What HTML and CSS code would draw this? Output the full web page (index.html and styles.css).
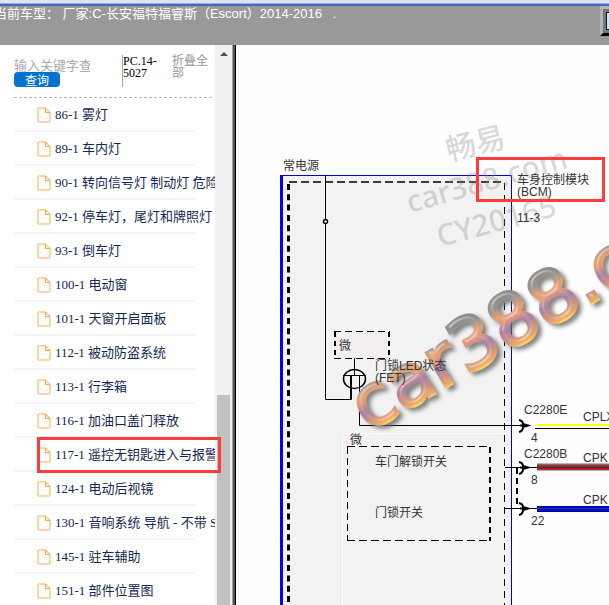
FILE: index.html
```
<!DOCTYPE html>
<html lang="zh-CN">
<head>
<meta charset="utf-8">
<title>长安福特福睿斯 电路图</title>
<link rel="stylesheet" href="styles.css">
</head>
<body>
<svg class="symbols" aria-hidden="true">
  <symbol id="file" viewBox="0 0 14 16">
    <path d="M2 1h6.500l4.500 4.500V14q0 1-1 1H2q-1 0-1-1V2q0-1 1-1z" fill="#fffdf9" stroke="#fac98f" stroke-width="1.500"/>
    <path d="M8.500 1v4.500H13" fill="none" stroke="#f2ad60" stroke-width="1.200"/>
  </symbol>
</svg>
<div class="page">
  <header class="topbar">
    <h1 class="vehicle">当前车型： 厂家:C-长安福特福睿斯（Escort）2014-2016 &nbsp; .</h1>
    <button class="window-button" type="button" aria-label="窗口"></button>
  </header>
  <div class="body">
    <aside class="sidebar">
      <div class="sidebar-content">
        <div class="tools">
          <form class="search">
            <input class="search-input" type="text" placeholder="输入关键字查询" aria-label="关键字">
            <button class="search-button" type="button">查询</button>
          </form>
          <span class="code">PC.14-5027</span>
          <a class="collapse" href="#">折叠全部</a>
        </div>
        <ul class="tree">
          <li><a href="#"><svg class="icon"><use href="#file"/></svg>86-1 雾灯</a></li>
          <li><a href="#"><svg class="icon"><use href="#file"/></svg>89-1 车内灯</a></li>
          <li><a href="#"><svg class="icon"><use href="#file"/></svg>90-1 转向信号灯 制动灯 危险</a></li>
          <li><a href="#"><svg class="icon"><use href="#file"/></svg>92-1 停车灯，尾灯和牌照灯</a></li>
          <li><a href="#"><svg class="icon"><use href="#file"/></svg>93-1 倒车灯</a></li>
          <li><a href="#"><svg class="icon"><use href="#file"/></svg>100-1 电动窗</a></li>
          <li><a href="#"><svg class="icon"><use href="#file"/></svg>101-1 天窗开启面板</a></li>
          <li><a href="#"><svg class="icon"><use href="#file"/></svg>112-1 被动防盗系统</a></li>
          <li><a href="#"><svg class="icon"><use href="#file"/></svg>113-1 行李箱</a></li>
          <li><a href="#"><svg class="icon"><use href="#file"/></svg>116-1 加油口盖门释放</a></li>
          <li class="marked"><a href="#"><svg class="icon"><use href="#file"/></svg>117-1 遥控无钥匙进入与报警</a></li>
          <li><a href="#"><svg class="icon"><use href="#file"/></svg>124-1 电动后视镜</a></li>
          <li><a href="#"><svg class="icon"><use href="#file"/></svg>130-1 音响系统 导航 - 不带 S</a></li>
          <li><a href="#"><svg class="icon"><use href="#file"/></svg>145-1 驻车辅助</a></li>
          <li><a href="#"><svg class="icon"><use href="#file"/></svg>151-1 部件位置图</a></li>
        </ul>
      </div>
      <div class="scrollbar">
        <span class="arrow"></span>
        <span class="thumb"></span>
      </div>
    </aside>
    <main class="diagram">
      <svg class="drawing" role="img" aria-label="电路图">
        <defs>
          <linearGradient id="metal" gradientUnits="userSpaceOnUse" x1="0" y1="-56" x2="0" y2="3">
            <stop offset="0" stop-color="#858585"/>
            <stop offset=".22" stop-color="#9a9490"/>
            <stop offset=".38" stop-color="#e8a070"/>
            <stop offset=".48" stop-color="#e09a78"/>
            <stop offset=".62" stop-color="#a880a8"/>
            <stop offset=".78" stop-color="#c89080"/>
            <stop offset=".93" stop-color="#f0ac68"/>
            <stop offset="1" stop-color="#ffe860"/>
          </linearGradient>
          <filter id="bevel" x="-10%" y="-20%" width="125%" height="150%">
            <feGaussianBlur in="SourceAlpha" stdDeviation="2" result="soft"/>
            <feOffset in="soft" dx="4" dy="3" result="shift"/>
            <feFlood flood-color="#666" flood-opacity=".8"/>
            <feComposite in2="shift" operator="in" result="shadow"/>
            <feSpecularLighting in="soft" surfaceScale="4" specularConstant=".4" specularExponent="18" lighting-color="#fff" result="light">
              <feDistantLight azimuth="225" elevation="40"/>
            </feSpecularLighting>
            <feComposite in="light" in2="SourceAlpha" operator="in" result="shine"/>
            <feMerge>
              <feMergeNode in="shadow"/>
              <feMergeNode in="SourceGraphic"/>
              <feMergeNode in="shine"/>
            </feMerge>
          </filter>
        </defs>
        <g transform="translate(-236 -45)">
          <path d="M281 176h230v440H281z" fill="#f2f2f2"/>
          <path d="M342.500 616V433.500h169" fill="none" stroke="#fff"/>
          <path d="M281 175.500h230.500V616" fill="none" stroke="#0000e0"/>
          <path d="M281.500 175v440" stroke="#00f" stroke-width="3"/>
          <path d="M289 182h215" stroke="#000" stroke-width="1.500" stroke-dasharray="8 4"/>
          <path d="M288.500 184v430" stroke="#000" stroke-width="3" stroke-dasharray="6 4.300"/>
          <path d="M504.500 183v430" stroke="#000" stroke-dasharray="7 5"/>
          <path d="M325.500 175v224.500h26v-20" fill="none" stroke="#000"/>
          <circle cx="325.500" cy="221.500" r="2" fill="#fff" stroke="#000" stroke-width="1.500"/>
          <path d="M335 331h54v27h-54z" fill="#f3eff0"/>
          <path d="M334 331.500h56M334 358.500h56" stroke="#000" stroke-dasharray="7 4"/>
          <path d="M335 332v27M389 332v27" stroke="#000" stroke-width="2" stroke-dasharray="5 4"/>
          <g fill="none" stroke="#000">
            <path d="M354.500 358v18M343 375.500h23M359.500 376v49.500H528"/>
            <path d="M351 376v23" stroke-width="2"/>
            <ellipse cx="354.500" cy="379" rx="11" ry="9.500" stroke-width="1.500"/>
            <path d="M505 467.500h32M505 508.500h32"/>
            <path d="M517 468v38" stroke-width="2" stroke-dasharray="6 4"/>
            <path d="M347 446.500h143M347 540.500h143" stroke-dasharray="8 4"/>
            <path d="M347.500 447v93" stroke-dasharray="7 4"/>
            <path d="M490 447v94" stroke-width="2" stroke-dasharray="6 4"/>
          </g>
          <g class="wm-plain">
            <text x="449" y="161" class="wm-cjk" transform="rotate(-14 449 161)">畅易</text>
            <text x="410" y="213" transform="rotate(-16 410 213)">car388.com</text>
            <text x="440" y="247" transform="rotate(-15 440 247)">CY20165</text>
          </g>
          <g filter="url(#bevel)">
            <text class="wm-metal" x="0" y="0" transform="translate(368 432) rotate(-30)" fill="url(#metal)" stroke="url(#metal)">car388.com</text>
          </g>
          <path d="M537 425h83" stroke="#ff0" stroke-width="2"/>
          <path d="M535 428.500h83" stroke="#000"/>
          <path d="M537 467h83" stroke="#7a6d6d" stroke-width="7"/>
          <path d="M537 467.500h83" stroke="#b02323" stroke-width="5"/>
          <path d="M537 467.500h83" stroke="#203070"/>
          <path d="M537 509h83" stroke="#000080" stroke-width="6"/>
          <path d="M537 509h83" stroke="#00f" stroke-width="4"/>
          <path d="M537 508.500h83" stroke="#005060"/>
          <g fill="none" stroke="#000" stroke-width="2">
            <path d="M519 420q4 1 4 4l5 1.500-5 1.500q0 4-4 5M520 425.500h8"/>
            <path d="M519 462q4 1 4 4l5 1.500-5 1.500q0 4-4 5M520 467.500h6"/>
            <path d="M519 503q4 1 4 4l5 1.500-5 1.500q0 4-4 5M520 508.500h6"/>
          </g>
          <g class="label">
            <text x="283" y="170">常电源</text>
            <text x="517" y="184">车身控制模块</text>
            <text x="517" y="196">(BCM)</text>
            <text x="517" y="222">11-3</text>
            <text x="339" y="350">微</text>
            <text x="375" y="370">门锁LED状态</text>
            <text x="375" y="382">(FET)</text>
            <text x="524" y="414">C2280E</text>
            <text x="583" y="421">CPLX</text>
            <text x="531" y="442">4</text>
            <text x="350" y="444">微</text>
            <text x="375" y="466">车门解锁开关</text>
            <text x="524" y="458">C2280B</text>
            <text x="583" y="462">CPK</text>
            <text x="531" y="484">8</text>
            <text x="375" y="517">门锁开关</text>
            <text x="583" y="504">CPK</text>
            <text x="531" y="525">22</text>
          </g>
          <path d="M477.500 158.500h126v42h-126z" fill="none" stroke="#ff3b3b" stroke-width="3"/>
        </g>
      </svg>
    </main>
  </div>
</div>
</body>
</html>
```
FILE: styles.css
```
*, *::after { box-sizing: border-box; }

body {
  margin: 0;
  background: #fff;
  color: #142850;
  font: 13px/16px "Liberation Serif", "Noto Sans CJK SC", serif;
}

a { color: inherit; text-decoration: none; }

.symbols { display: none; }

.page {
  display: flex;
  flex-direction: column;
  height: 100vh;
  overflow: hidden;
}

.topbar {
  display: flex;
  flex: none;
  justify-content: space-between;
  height: 45px;
  padding-top: 6px;
  overflow: hidden;
  background: linear-gradient(#dce4f6 3px, #4a72c8 4px, #3a5fb4 6px, #999 6px);
}

.vehicle {
  margin: 0 0 0 -6px;
  color: #fff;
  font: 13px/16px "Liberation Sans", "Noto Sans CJK SC", sans-serif;
  white-space: nowrap;
}

.window-button {
  flex: none;
  width: 32px;
  height: 30px;
  margin-right: -23px;
  padding: 0;
  border: 3px solid #b4b4b4;
  border-bottom-color: #000;
  background: #bdeaff;
  box-shadow: inset 0 0 0 3px #777, inset 0 0 0 4px #111;
}

.body {
  display: flex;
  flex: 1;
  min-height: 0;
}

.sidebar {
  display: flex;
  flex: none;
  width: 236px;
  padding-right: 4px;
  background: linear-gradient(to left, #000 1px, #555 1px, #555 3px, #a0a0a0 3px, #a0a0a0 4px, #fff 4px);
}

.sidebar-content {
  flex: 1;
  min-width: 0;
  overflow: clip;
  overflow-clip-margin: 6px;
}

.tools {
  display: flex;
  height: 53px;
  margin: 0 3px 0 14px;
  padding-top: 10px;
  border-bottom: 1px dashed #bbb;
  line-height: 12px;
}

.search {
  display: flex;
  flex: none;
  flex-direction: column;
  align-items: flex-start;
  width: 108px;
}

.search-input {
  width: 76px;
  height: 17px;
  padding: 2px 0 0;
  border: 0;
  outline: 0;
  background: none;
  font: 13px/15px "Noto Sans CJK SC", sans-serif;
}

.search-input::placeholder { color: #aaa; opacity: 1; }

.search-button {
  width: 46px;
  height: 15px;
  padding: 0;
  border: 0;
  border-radius: 4px;
  background: #0072cf;
  color: #fff;
  font: 12px/14px "Noto Sans CJK SC", sans-serif;
}

.code {
  flex: none;
  width: 44px;
  height: 32px;
  border-left: 1px solid #aaa;
  color: #000;
  font-size: 12px;
}

.collapse {
  width: 38px;
  margin-left: 6px;
  color: #999;
  font-size: 12px;
}

.tree {
  margin: 0;
  padding: 0 20px 0 14px;
  list-style: none;
}

.tree li {
  position: relative;
  height: 34px;
  border-bottom: 2px solid #f5f5f5;
}

.tree a {
  display: flex;
  align-items: center;
  width: 201px;
  height: 34px;
  padding-left: 23px;
  overflow: hidden;
  white-space: pre;
}

.icon {
  flex: none;
  width: 14px;
  height: 16px;
  margin-right: 4px;
}

.marked::after {
  position: absolute;
  z-index: 1;
  top: -1px;
  left: 23px;
  width: 184px;
  height: 36px;
  border: 3px solid #ff3b3b;
  content: "";
}

.scrollbar {
  display: flex;
  flex: none;
  flex-direction: column;
  justify-content: space-between;
  width: 17px;
  padding: 7px 2px 0;
  background: #f1f1f1;
}

.arrow {
  align-self: center;
  border: 4px solid transparent;
  border-top: 0;
  border-bottom-color: #505050;
}

.thumb {
  height: 38%;
  background: #c1c1c1;
}

.diagram {
  flex: 1;
  min-width: 0;
  background: #fefefe;
}

.drawing {
  display: block;
  width: 100%;
  height: 100%;
}

.label {
  fill: #333;
  font: 12px "Liberation Sans", "Noto Sans CJK SC", sans-serif;
}

.wm-plain {
  fill: #888;
  fill-opacity: .32;
  font: 500 30px "Noto Sans", "Noto Sans CJK SC", sans-serif;
}

.wm-metal {
  font: 72px "DejaVu Sans", sans-serif;
  stroke-width: 3px;
}
```
